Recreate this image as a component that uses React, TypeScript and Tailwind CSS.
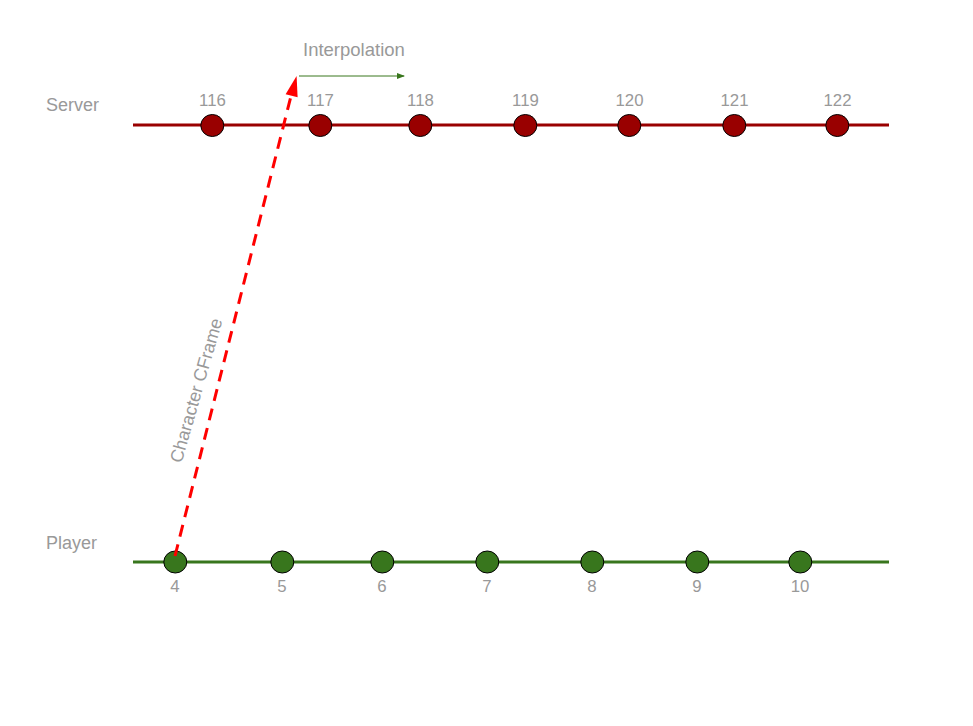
import React from "react";

const serverX = [212, 320, 420, 525, 629, 734, 837];
const serverL = ["116", "117", "118", "119", "120", "121", "122"];
const playerX = [175, 282, 382, 487, 592, 697, 800];
const playerL = ["4", "5", "6", "7", "8", "9", "10"];

export default function App() {
  return (
    <div className="w-[973px] h-[726px] bg-white relative overflow-hidden" style={{ fontFamily: '"Liberation Sans", Arial, sans-serif' }}>
      <svg width="973" height="726" viewBox="0 0 973 726" className="absolute inset-0">
        <defs>
          <marker id="greenHead" markerWidth="8" markerHeight="6" refX="7" refY="3" orient="auto" markerUnits="userSpaceOnUse">
            <path d="M0,0 L8,3 L0,6 Z" fill="#38761d" />
          </marker>
        </defs>
        <line x1="133" y1="125" x2="889" y2="125" stroke="#990000" strokeWidth="3" />
        <line x1="133" y1="562" x2="889" y2="562" stroke="#38761d" strokeWidth="3" />
        {serverX.map((x) => (
          <ellipse key={x} cx={x + 0.3} cy={125.5} rx={11.5} ry={11} fill="#990000" stroke="#000" strokeWidth="1" />
        ))}
        {playerX.map((x) => (
          <ellipse key={x} cx={x + 0.3} cy={562} rx={11.5} ry={11} fill="#38761d" stroke="#000" strokeWidth="1" />
        ))}
        <line x1="175" y1="556" x2="292" y2="92" stroke="#ff0000" strokeWidth="3" strokeDasharray="12 8" />
        <path d="M296.6,76 L297.6,97.2 L285.6,94.2 Z" fill="#ff0000" />
        <line x1="299" y1="76" x2="404" y2="76" stroke="#38761d" strokeWidth="1" markerEnd="url(#greenHead)" />
        <g fill="#999999">
          <text x="46" y="111" fontSize="18">Server</text>
          <text x="46" y="549" fontSize="18">Player</text>
          <text x="303" y="56" fontSize="18.5">Interpolation</text>
          {serverX.map((x, i) => (
            <text key={x} x={x + 0.5} y="105.5" fontSize="16.8" textAnchor="middle">{serverL[i]}</text>
          ))}
          {playerX.map((x, i) => (
            <text key={x} x={x} y="592" fontSize="16.8" textAnchor="middle">{playerL[i]}</text>
          ))}
          <text x="0" y="0" fontSize="18" textAnchor="middle" transform="translate(202,392) rotate(-74)">Character CFrame</text>
        </g>
      </svg>
    </div>
  );
}
